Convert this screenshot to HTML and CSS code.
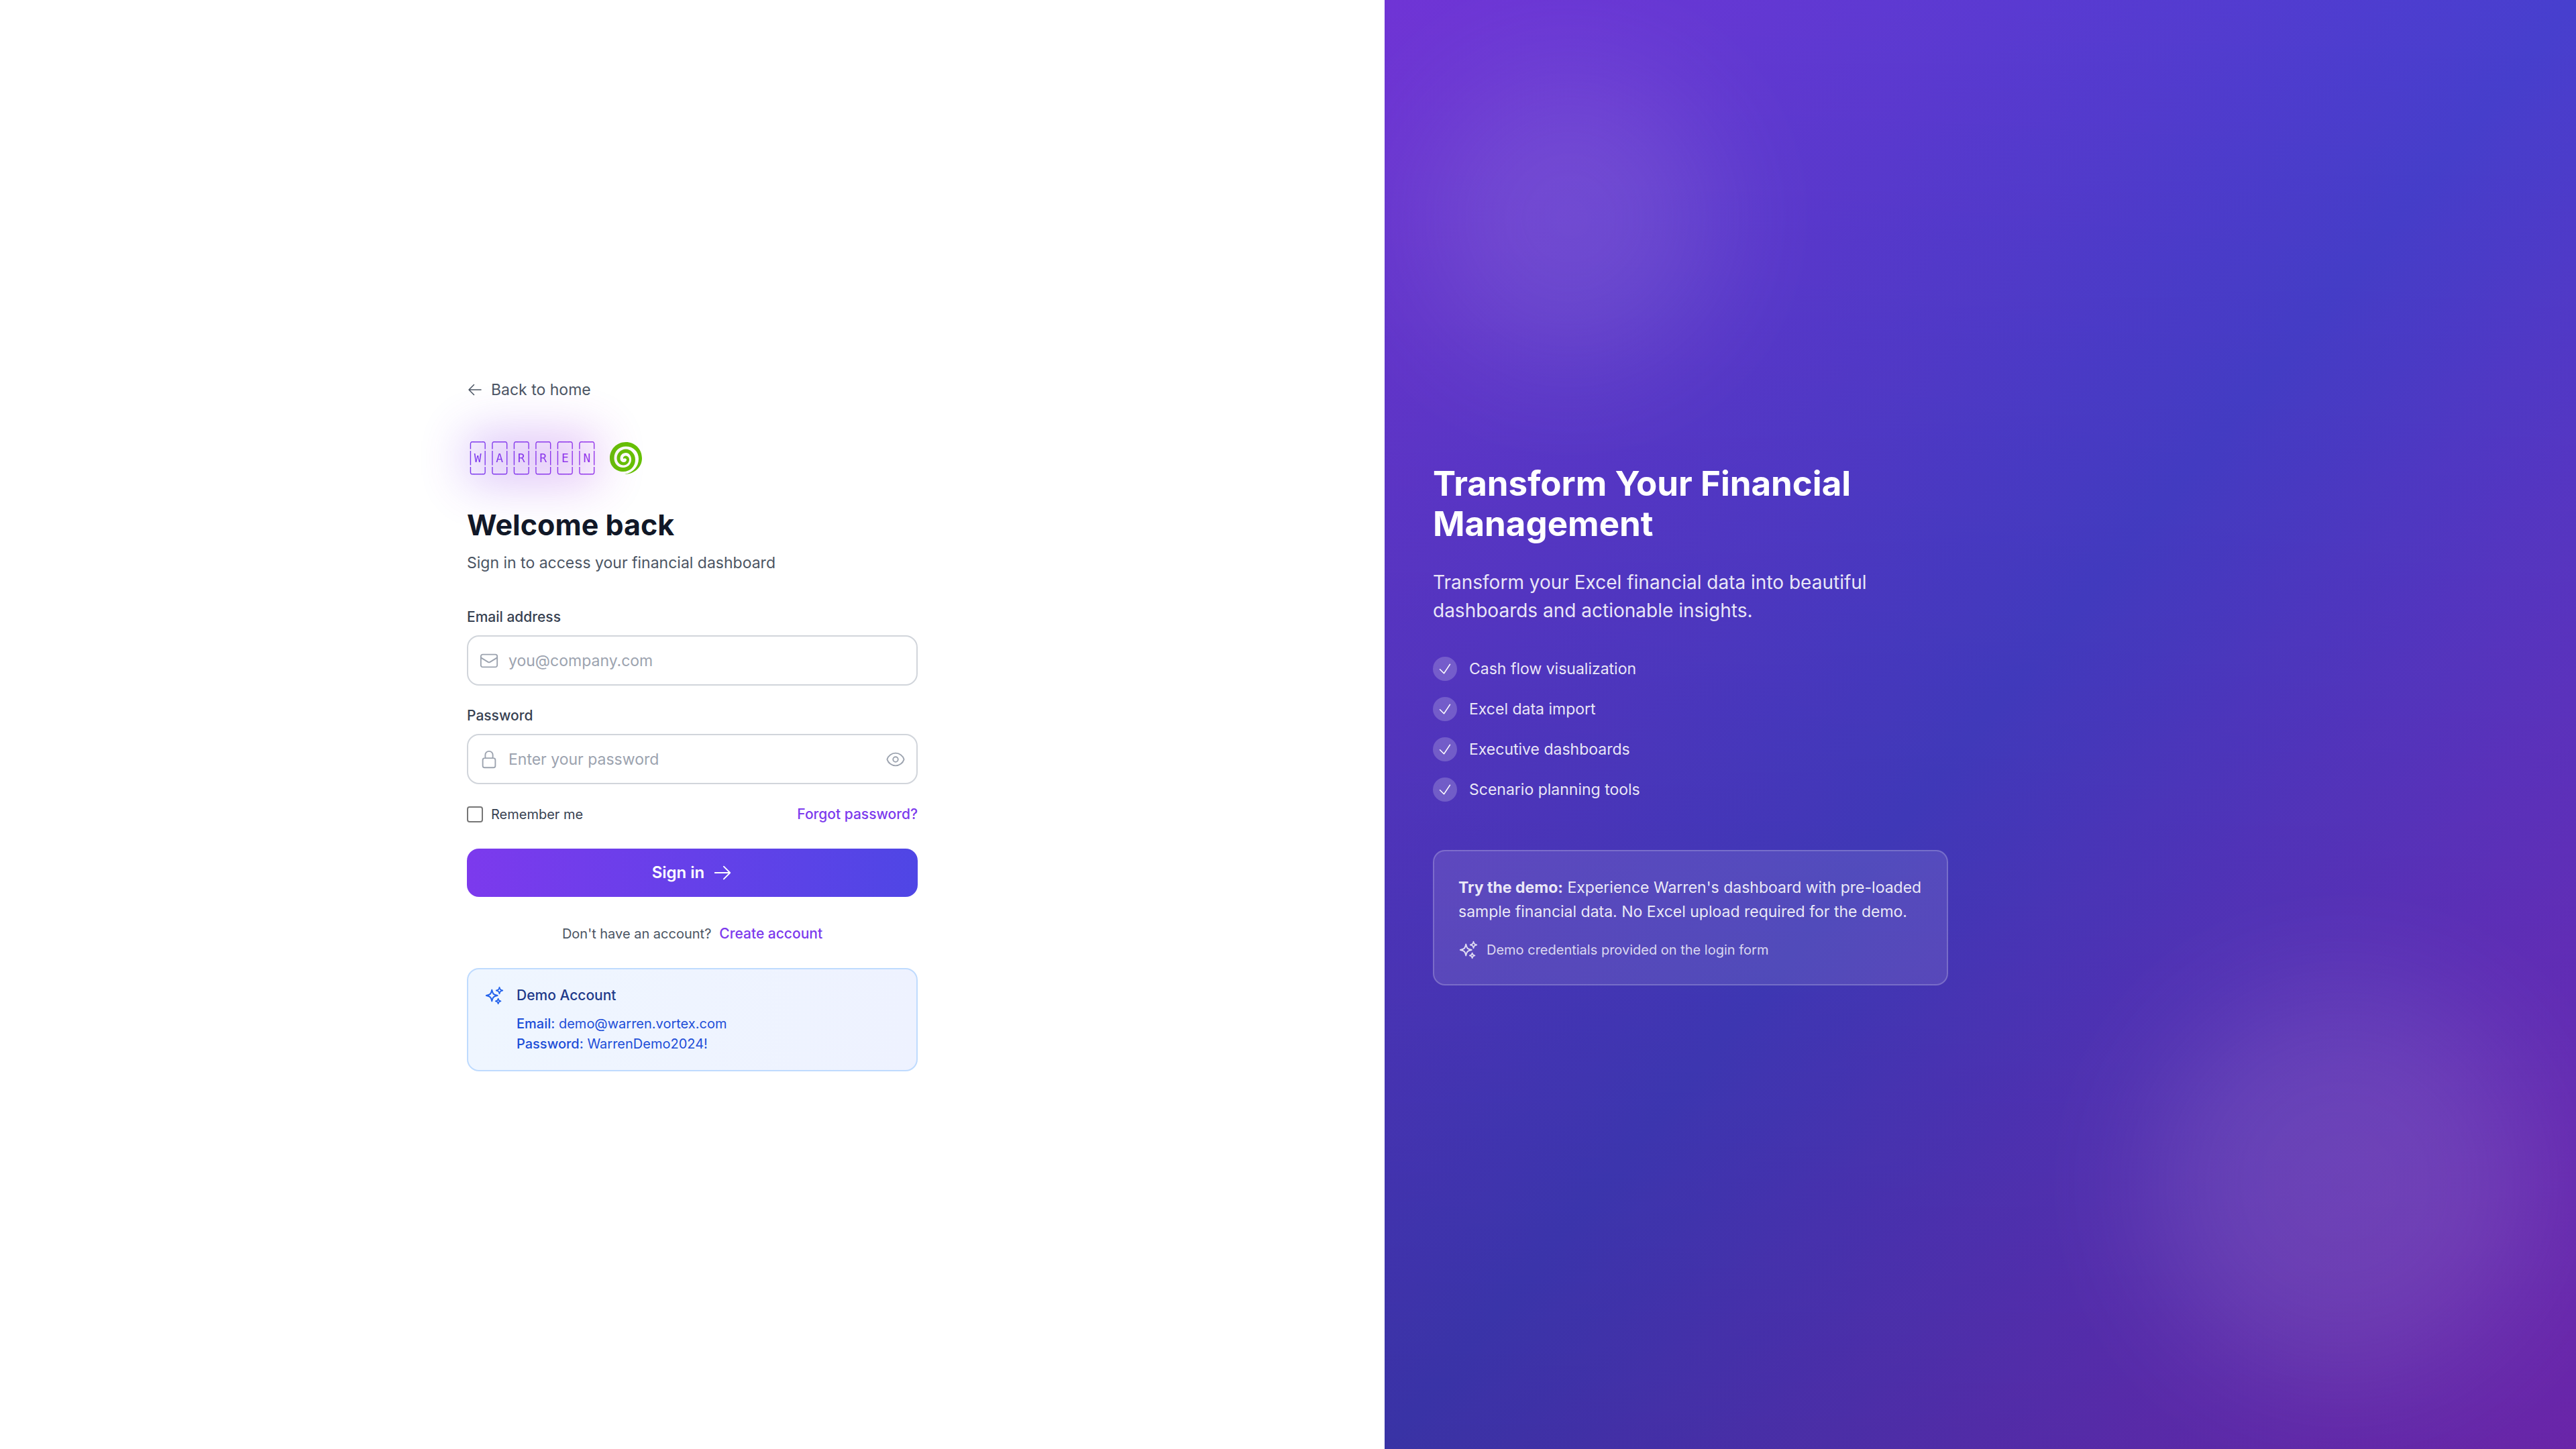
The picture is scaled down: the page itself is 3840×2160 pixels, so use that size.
FILE: index.html
```html
<!DOCTYPE html>
<html lang="en">
<head>
<meta charset="utf-8">
<title>Sign in - Warren</title>
<meta name="viewport" content="width=device-width, initial-scale=1">
<link rel="stylesheet" href="styles.css">
</head>
<body>
<svg class="sprite" aria-hidden="true">
  <symbol id="arrow-left" viewBox="0 0 24 24"><path d="M10.5 19.5 3 12m0 0 7.5-7.5M3 12h18"/></symbol>
  <symbol id="arrow-right" viewBox="0 0 24 24"><path d="M13.5 4.5 21 12m0 0-7.5 7.5M21 12H3"/></symbol>
  <symbol id="envelope" viewBox="0 0 24 24"><path d="M21.75 6.75v10.5a2.25 2.25 0 0 1-2.25 2.25h-15a2.25 2.25 0 0 1-2.25-2.25V6.75m19.5 0A2.25 2.25 0 0 0 19.5 4.5h-15a2.25 2.25 0 0 0-2.25 2.25m19.5 0v.243a2.25 2.25 0 0 1-1.07 1.916l-7.5 4.615a2.25 2.25 0 0 1-2.36 0L3.32 8.91a2.25 2.25 0 0 1-1.07-1.916V6.75"/></symbol>
  <symbol id="lock" viewBox="0 0 24 24"><path d="M16.5 10.5V6.75a4.5 4.5 0 1 0-9 0v3.75m-.75 11.25h10.5a2.25 2.25 0 0 0 2.25-2.25v-6.75a2.25 2.25 0 0 0-2.25-2.25H6.75a2.25 2.25 0 0 0-2.25 2.25v6.75a2.25 2.25 0 0 0 2.25 2.25Z"/></symbol>
  <symbol id="eye" viewBox="0 0 24 24"><path d="M2.036 12.322a1.012 1.012 0 0 1 0-.639C3.423 7.51 7.36 4.5 12 4.5c4.638 0 8.573 3.007 9.963 7.178.07.207.07.431 0 .639C20.577 16.49 16.64 19.5 12 19.5c-4.638 0-8.573-3.007-9.963-7.178Z"/><path d="M15 12a3 3 0 1 1-6 0 3 3 0 0 1 6 0Z"/></symbol>
  <symbol id="check" viewBox="0 0 24 24"><path d="m4.5 12.75 6 6 9-13.5"/></symbol>
  <symbol id="sparkles" viewBox="0 0 24 24"><path d="M9.813 15.904 9 18.75l-.813-2.846a4.5 4.5 0 0 0-3.09-3.09L2.25 12l2.846-.813a4.5 4.5 0 0 0 3.09-3.09L9 5.25l.813 2.846a4.5 4.5 0 0 0 3.09 3.09L15.75 12l-2.846.813a4.5 4.5 0 0 0-3.09 3.09ZM18.259 8.715 18 9.75l-.259-1.035a3.375 3.375 0 0 0-2.455-2.456L14.25 6l1.036-.259a3.375 3.375 0 0 0 2.455-2.456L18 2.25l.259 1.035a3.375 3.375 0 0 0 2.456 2.456L21.75 6l-1.035.259a3.375 3.375 0 0 0-2.456 2.456ZM16.894 20.567 16.5 21.75l-.394-1.183a2.25 2.25 0 0 0-1.423-1.423L13.5 18.75l1.183-.394a2.25 2.25 0 0 0 1.423-1.423l.394-1.183.394 1.183a2.25 2.25 0 0 0 1.423 1.423l1.183.394-1.183.394a2.25 2.25 0 0 0-1.423 1.423Z"/></symbol>
</svg>

<div class="page">
  <main class="login">
    <div class="login-inner">
      <a class="back" href="#"><svg class="icon"><use href="#arrow-left"/></svg>Back to home</a>

      <div class="brand">
        <div class="wordmark">
<pre class="ascii" aria-label="Warren">╭─╮╭─╮╭─╮╭─╮╭─╮╭─╮
│W││A││R││R││E││N│
╰─╯╰─╯╰─╯╰─╯╰─╯╰─╯</pre>
        </div>
        <svg class="swirl" viewBox="0 0 48 48" aria-hidden="true"><path d="M22 48C36 48 48 38 48 24C48 10 37 0 24 0C10 0 0 11 0 24C0 36 9 44 20 44C31 44 38 36 38 26C38 17 31 10.500 24 10.500C16 10.500 10.500 17 10.500 24C10.500 30 15 34.500 20.500 34.500C26 34.500 29 30 29 26C29 22.500 26 20 23 20.500C20.500 21 19.500 23 20 25C21 24 24.500 24 25 26C25 28.500 23 30 21 30C17.500 30 15.500 27.500 15.500 24.500C15.500 19.500 19 16 24 16C29 16 32 20.500 32 26C32 33 27 38 20 38C12 38 6.500 32 6.500 24C6.500 13.500 14 6.500 24 6.500C35 6.500 43 14 43 25C43 37 34 46 22 48Z"/></svg>
      </div>

      <h1 class="title">Welcome back</h1>
      <p class="subtitle">Sign in to access your financial dashboard</p>

      <form class="form">
        <div class="field">
          <label class="label" for="email">Email address</label>
          <div class="control">
            <svg class="icon icon-md lead"><use href="#envelope"/></svg>
            <input class="input" id="email" type="email" placeholder="you@company.com">
          </div>
        </div>
        <div class="field">
          <label class="label" for="password">Password</label>
          <div class="control">
            <svg class="icon icon-md lead"><use href="#lock"/></svg>
            <input class="input" id="password" type="password" placeholder="Enter your password">
            <button class="reveal" type="button" aria-label="Show password"><svg class="icon icon-md"><use href="#eye"/></svg></button>
          </div>
        </div>
        <div class="options">
          <label class="remember" for="remember"><input class="checkbox" id="remember" type="checkbox">Remember me</label>
          <a class="link" href="#">Forgot password?</a>
        </div>
        <button class="submit" type="submit">Sign in<svg class="icon icon-md"><use href="#arrow-right"/></svg></button>
      </form>

      <p class="signup">Don't have an account? <a class="link" href="#">Create account</a></p>

      <section class="demo">
        <svg class="icon icon-md"><use href="#sparkles"/></svg>
        <div>
          <h2 class="demo-title">Demo Account</h2>
          <p class="demo-line"><span class="key">Email:</span> demo@warren.vortex.com</p>
          <p class="demo-line"><span class="key">Password:</span> WarrenDemo2024!</p>
        </div>
      </section>
    </div>
  </main>

  <aside class="promo">
    <div class="promo-inner">
      <h2 class="promo-title">Transform Your Financial Management</h2>
      <p class="promo-lead">Transform your Excel financial data into beautiful dashboards and actionable insights.</p>
      <ul class="features">
        <li class="feature"><span class="tick"><svg class="icon"><use href="#check"/></svg></span>Cash flow visualization</li>
        <li class="feature"><span class="tick"><svg class="icon"><use href="#check"/></svg></span>Excel data import</li>
        <li class="feature"><span class="tick"><svg class="icon"><use href="#check"/></svg></span>Executive dashboards</li>
        <li class="feature"><span class="tick"><svg class="icon"><use href="#check"/></svg></span>Scenario planning tools</li>
      </ul>
      <div class="card">
        <p class="card-text"><strong>Try the demo:</strong> Experience Warren's dashboard with pre-loaded sample financial data. No Excel upload required for the demo.</p>
        <p class="card-note"><svg class="icon icon-md"><use href="#sparkles"/></svg>Demo credentials provided on the login form</p>
      </div>
    </div>
  </aside>
</div>
</body>
</html>
```
FILE: styles.css
```css
*,
*::before,
*::after {
  box-sizing: border-box;
}

body,
h1,
h2,
p,
ul,
pre {
  margin: 0;
}

body {
  background: #fff;
  color: #111827;
  font-family: Inter, "Liberation Sans", sans-serif;
  font-size: 23px;
  line-height: 36px;
}

a {
  text-decoration: none;
}

button,
input {
  font: inherit;
}

.sprite {
  display: none;
}

.icon {
  display: block;
  flex: none;
  width: 24px;
  height: 24px;
  fill: none;
  stroke: currentColor;
  stroke-width: 1.5;
  stroke-linecap: round;
  stroke-linejoin: round;
}

.icon-md {
  width: 30px;
  height: 30px;
}

.page {
  display: flex;
  min-height: 100vh;
}

/* Sign-in column */
.login {
  display: flex;
  flex: 1;
  flex-direction: column;
  justify-content: center;
  padding: 72px 144px;
}

.login-inner {
  width: 100%;
  max-width: 672px;
  margin: 0 auto;
}

.back {
  display: flex;
  align-items: center;
  gap: 12px;
  width: fit-content;
  color: #4b5563;
}

.brand {
  display: flex;
  align-items: center;
  gap: 18px;
  margin-top: 48px;
}

.wordmark {
  position: relative;
}

.wordmark::before {
  content: "";
  position: absolute;
  inset: 0;
  background: linear-gradient(90deg, #7c3aed, #a832e0);
  filter: blur(36px);
  opacity: 0.3;
}

.ascii {
  position: relative;
  background: linear-gradient(90deg, #7c3aed, #9333ea);
  background-clip: text;
  color: transparent;
  font-family: "DejaVu Sans Mono", monospace;
  font-size: 18px;
  line-height: 24px;
}

.swirl {
  width: 48px;
  height: 48px;
  fill: #65c100;
}

.title {
  margin-top: 36px;
  font-size: 43px;
  font-weight: 700;
  line-height: 54px;
}

.subtitle {
  margin-top: 12px;
  color: #4b5563;
}

.form {
  display: flex;
  flex-direction: column;
  gap: 30px;
  margin-top: 48px;
}

.label {
  display: block;
  margin-bottom: 12px;
  color: #374151;
  font-size: 21px;
  font-weight: 500;
  line-height: 30px;
}

.control {
  position: relative;
}

.input {
  display: block;
  width: 100%;
  height: 75px;
  padding: 0 60px;
  border: 2px solid #d1d5db;
  border-radius: 18px;
  background: #fff;
  color: #111827;
}

.input::placeholder {
  color: #9ca3af;
}

.lead,
.reveal {
  position: absolute;
  top: 50%;
  color: #9ca3af;
  transform: translateY(-50%);
}

.lead {
  left: 18px;
}

.reveal {
  right: 18px;
  padding: 0;
  border: 0;
  background: none;
}

.options {
  display: flex;
  align-items: center;
  justify-content: space-between;
  font-size: 20px;
  line-height: 30px;
}

.remember {
  display: flex;
  align-items: center;
  gap: 12px;
  color: #374151;
}

.checkbox {
  appearance: none;
  width: 24px;
  height: 24px;
  margin: 0;
  border: 2px solid #767676;
  border-radius: 4px;
  background: #fff;
}

.link {
  color: #7c3aed;
  font-size: 21px;
  font-weight: 500;
}

.submit {
  display: flex;
  align-items: center;
  justify-content: center;
  gap: 12px;
  height: 72px;
  margin-top: 6px;
  border: 0;
  border-radius: 18px;
  background: linear-gradient(90deg, #7c3aed, #4f46e5);
  color: #fff;
  font-size: 24px;
  font-weight: 600;
}

.signup {
  display: flex;
  align-items: baseline;
  justify-content: center;
  gap: 12px;
  margin-top: 40px;
  color: #4b5563;
  font-size: 20px;
  line-height: 30px;
}

.demo {
  display: flex;
  gap: 18px;
  margin-top: 36px;
  padding: 24px;
  border: 2px solid #bfdbfe;
  border-radius: 18px;
  background: linear-gradient(90deg, #eff6ff, #eef2ff);
  color: #2563eb;
  font-size: 20px;
  line-height: 30px;
}

.demo-title {
  margin-bottom: 12px;
  color: #1e3a8a;
  font-size: 21px;
  font-weight: 500;
}

.demo-line {
  color: #1d4ed8;
}

.key {
  font-weight: 500;
}

/* Promotional column */
.promo {
  position: relative;
  display: flex;
  flex: 1;
  flex-direction: column;
  justify-content: center;
  overflow: hidden;
  background:
    linear-gradient(to top, rgba(0, 0, 0, 0.2), transparent),
    linear-gradient(rgba(0, 0, 0, 0.1), rgba(0, 0, 0, 0.1)),
    linear-gradient(to bottom right, #7c3aed, #4f46e5, #9333ea);
  color: #fff;
}

.promo::before,
.promo::after {
  content: "";
  position: absolute;
  border-radius: 50%;
  background: #fff;
  filter: blur(96px);
  opacity: 0.1;
}

.promo::before {
  top: 5%;
  left: 60px;
  width: 432px;
  height: 432px;
}

.promo::after {
  right: 60px;
  bottom: 5%;
  width: 576px;
  height: 576px;
}

.promo-inner {
  position: relative;
  z-index: 1;
  max-width: 768px;
  margin: 72px;
}

.promo-title {
  font-size: 51px;
  font-weight: 700;
  line-height: 60px;
}

.promo-lead {
  margin-top: 36px;
  color: rgba(255, 255, 255, 0.9);
  font-size: 28px;
  line-height: 42px;
}

.features {
  display: flex;
  flex-direction: column;
  gap: 24px;
  margin-top: 48px;
  padding: 0;
  list-style: none;
}

.feature {
  display: flex;
  align-items: center;
  gap: 18px;
  color: rgba(255, 255, 255, 0.9);
}

.tick {
  display: grid;
  place-items: center;
  width: 36px;
  height: 36px;
  border-radius: 50%;
  background: rgba(255, 255, 255, 0.2);
  color: #fff;
}

.card {
  margin-top: 72px;
  padding: 36px;
  border: 2px solid rgba(255, 255, 255, 0.2);
  border-radius: 18px;
  background: rgba(255, 255, 255, 0.1);
}

.card-text {
  color: rgba(255, 255, 255, 0.9);
}

.card-note {
  display: flex;
  align-items: center;
  gap: 12px;
  margin-top: 24px;
  color: rgba(255, 255, 255, 0.8);
  font-size: 20px;
  line-height: 30px;
}
```
